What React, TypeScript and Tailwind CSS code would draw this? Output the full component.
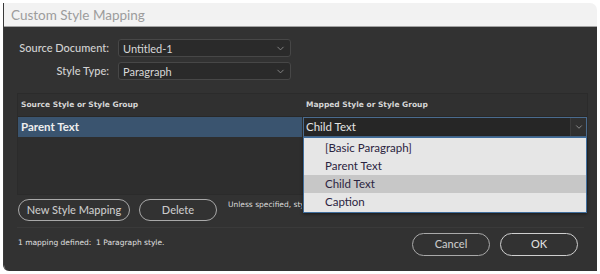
import { ChevronDown } from 'lucide-react'

const ui = { fontFamily: 'Lato, "Open Sans", sans-serif' }
const small = { fontFamily: '"DejaVu Sans", Verdana, sans-serif' }

function Select({ value }: { value: string }) {
  return (
    <div className="flex h-[18px] w-[173px] items-center justify-between rounded-[3px] border border-[#474747] bg-[#2a2a2a] pl-[4px] pr-[4px]">
      <span className="text-[11px] leading-none text-[#d8d8d8]">{value}</span>
      <ChevronDown size={11} strokeWidth={2} className="text-[#8a8a8a]" />
    </div>
  )
}

function PillButton({ label, className }: { label: string; className: string }) {
  return (
    <button
      className={`flex h-[22px] items-center justify-center whitespace-nowrap rounded-full border-[1.5px] border-[#a9a9a9] text-[11px] font-medium text-[#c9c9c9] ${className}`}
    >
      {label}
    </button>
  )
}

export default function App() {
  const items = ['[Basic Paragraph]', 'Parent Text', 'Child Text', 'Caption']

  return (
    <div className="h-[274px] w-[600px] overflow-hidden bg-white" style={ui}>
      <div className="ml-[3px] mt-[3px] flex h-[268px] w-[594px] flex-col overflow-hidden rounded-tr-[7px] rounded-bl-[6px] border-l border-[#3a3a3a]">
        <div className="flex h-[24px] shrink-0 items-center border-b border-[#a3a3a3] bg-[#f2f2f2] pl-[7px] pt-[1px] text-[13.5px] text-[#9c9c9c]">
          Custom Style Mapping
        </div>

        <div className="relative flex flex-1 flex-col bg-[#323232] px-[13px] pt-[12px]">
          <div className="flex flex-col gap-[5px]">
            <div className="flex items-center">
              <span className="w-[92px] whitespace-nowrap text-right text-[11px] font-medium text-[#d2d2d2]">Source Document:</span>
              <div className="ml-[9px]">
                <Select value="Untitled-1" />
              </div>
            </div>
            <div className="flex items-center">
              <span className="w-[92px] whitespace-nowrap text-right text-[11px] font-medium text-[#d2d2d2]">Style Type:</span>
              <div className="ml-[9px]">
                <Select value="Paragraph" />
              </div>
            </div>
          </div>

          <div className="relative mt-[13px] flex h-[102px] w-[571px] shrink-0 flex-col border border-[#2b2b2b] bg-[#2e2e2e]">
            <div className="flex h-[23px] items-center border-b border-[#282828] bg-[#303030] text-[7.5px] font-bold text-[#d6d6d6]" style={small}>
              <span className="w-[286px] pl-[3px]">Source Style or Style Group</span>
              <span className="pl-[2px]">Mapped Style or Style Group</span>
            </div>
            <div className="flex h-[20px] items-stretch">
              <div className="flex w-[284px] items-center bg-[#3a546f] pl-[3px] text-[11.5px] font-bold text-[#eeeeee]">
                Parent Text
              </div>
              <div className="ml-[1px] flex flex-1 items-stretch border border-[#4a6b8e] bg-[#262626]">
                <span className="flex flex-1 items-center pl-[2px] text-[11.5px] text-[#e4e4e4]">Child Text</span>
                <span className="flex w-[16px] items-center justify-center border-l border-[#3c3c3c] bg-[#303030]">
                  <ChevronDown size={10} strokeWidth={2} className="text-[#9a9a9a]" />
                </span>
              </div>
            </div>

            <div className="absolute left-[285px] top-[43px] z-10 flex w-[284px] flex-col border border-[#3f6d9c] bg-[#e6e6e6] py-[1px] shadow-[0_1px_3px_rgba(0,0,0,0.5)]">
              {items.map((it) => (
                <div
                  key={it}
                  className={`flex h-[18px] items-center pl-[21px] text-[11.5px] text-[#2b2440] ${it === 'Child Text' ? 'bg-[#c7c7c7]' : ''}`}
                >
                  {it}
                </div>
              ))}
            </div>
          </div>

          <div className="mt-[4px] flex items-center">
            <PillButton label="New Style Mapping" className="ml-[1px] w-[112px]" />
            <PillButton label="Delete" className="ml-[9px] w-[78px]" />
            <span className="ml-[11px] -mt-[10px] w-[74px] overflow-hidden whitespace-nowrap text-[7.5px] text-[#dcdcdc]" style={small}>
              Unless specified, styles with the same name will be mapped.
            </span>
          </div>

          <div className="mt-[6px] border-t border-[#3a3a3a]" />

          <div className="mt-[5px] flex items-center">
            <span className="ml-[1px] -mt-[4px] text-[7.5px] text-[#e0e0e0]" style={small}>
              1 mapping defined:&nbsp; 1 Paragraph style.
            </span>
            <div className="ml-auto mr-[6px] flex gap-[10px]">
              <PillButton label="Cancel" className="h-[23px] w-[78px] text-[#bdbdbd]" />
              <PillButton label="OK" className="h-[23px] w-[78px] border-[#cfcfcf] text-[#dedede]" />
            </div>
          </div>
        </div>
      </div>
    </div>
  )
}
